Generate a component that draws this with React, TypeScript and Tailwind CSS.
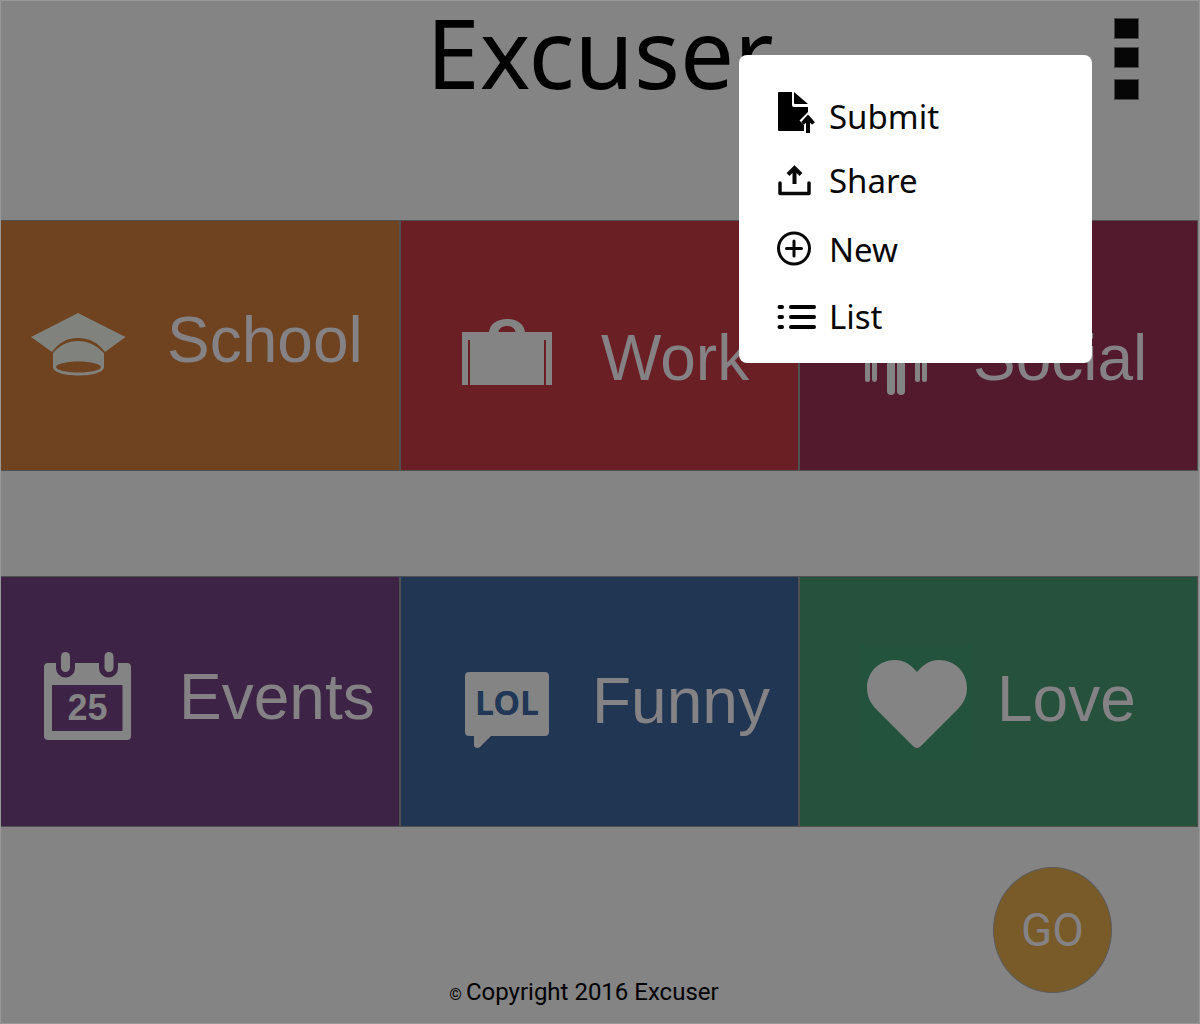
import React from "react";

function SchoolIcon() {
  return (
    <svg viewBox="0 0 116 116" className="size-[116px] shrink-0" fill="#80827e" aria-hidden="true">
      <path d="M60 26L107.500 50L87 65C80 56 72 51 60 51S41 56 34 65L13 50Z" />
      <path
        fillRule="evenodd"
        d="M35 66C42 58 50 54 60 54S78 58 86 66V80C86 85 75 88.500 60.500 88.500S35 85 35 80ZM60.500 74.500C48 74.500 38 77 38 80S48 85.500 60.500 85.500S83 83 83 80S73 74.500 60.500 74.500Z"
      />
    </svg>
  );
}

function WorkIcon() {
  return (
    <svg viewBox="0 0 116 116" className="size-[116px] shrink-0" fill="#848484" aria-hidden="true">
      <path
        fillRule="evenodd"
        d="M12 32H39C40 24 47 19 57 19S74 24 75 32H102V85H96V40H94V85H20V40H18V85H12ZM48.500 32H65.500C65 28 61 26 57 26S49 28 48.500 32Z"
      />
    </svg>
  );
}

function SocialIcon() {
  return (
    <svg viewBox="0 0 116 116" className="size-[116px] shrink-0" fill="#848484" aria-hidden="true">
      <circle cx="35" cy="21" r="6" />
      <circle cx="60" cy="12" r="8" />
      <circle cx="85" cy="21" r="6" />
      <path d="M29 30H41V79.500a2.500 2.500 0 0 1-5 0V56H34V79.500a2.500 2.500 0 0 1-5 0Z" />
      <path d="M79 30H91V79.500a2.500 2.500 0 0 1-5 0V56H84V79.500a2.500 2.500 0 0 1-5 0Z" />
      <path d="M51 23H69V91a4 4 0 0 1-8 0V58H59V91a4 4 0 0 1-8 0Z" />
    </svg>
  );
}

function EventsIcon() {
  return (
    <svg viewBox="0 0 116 116" className="size-[116px] shrink-0" fill="#848484" aria-hidden="true">
      <rect width="114" height="116" fill="#3d2345" />
      <path
        fillRule="evenodd"
        d="M18 25H26V30a9.500 9.500 0 0 0 19 0V25H69V30a9.500 9.500 0 0 0 19 0V25H97a4 4 0 0 1 4 4V98a4 4 0 0 1-4 4H18a4 4 0 0 1-4-4V29a4 4 0 0 1 4-4ZM22 47V93H92.500V47Z"
      />
      <rect x="31" y="14" width="9" height="20" rx="4.500" />
      <rect x="74.500" y="14" width="9" height="20" rx="4.500" />
      <text x="57.500" y="82" textAnchor="middle" className="font-['Liberation_Sans'] text-[36px] font-bold">
        25
      </text>
    </svg>
  );
}

function FunnyIcon() {
  return (
    <svg viewBox="0 0 116 116" className="size-[116px] shrink-0" fill="#848484" aria-hidden="true">
      <rect x="17" y="17" width="84" height="64" rx="4" />
      <path d="M26 80V90C26 93 30 94 32 92L44 80Z" />
      <text
        x="59"
        y="60"
        textAnchor="middle"
        fill="#203757"
        className="font-['Noto_Sans'] text-[34px] font-bold"
      >
        LOL
      </text>
    </svg>
  );
}

function LoveIcon() {
  return (
    <svg viewBox="0 0 116 116" className="size-[116px] shrink-0" fill="#848484" aria-hidden="true">
      <rect width="112" height="115" fill="#23523d" />
      <path d="M57 27C63 20 69 15 79 15C95 15 107 27 107 43C107 52 103 59 97 65L61 101Q57 105 53 101L17 65C11 59 7 52 7 43C7 27 19 15 35 15C45 15 51 20 57 27Z" />
    </svg>
  );
}

const tiles = [
  { name: "School", Icon: SchoolIcon, tone: "bg-[#6f4220]", pad: "pl-[17px] pt-[66px]", label: "ml-[33px] mt-[21px]" },
  { name: "Work", Icon: WorkIcon, tone: "bg-[#6a1f24]", pad: "pl-[49px] pt-[79px]", label: "ml-[35px] mt-[26px]" },
  { name: "Social", Icon: SocialIcon, tone: "bg-[#531a2e]", pad: "pl-9 pt-[79px]", label: "ml-[21px] mt-[26px]" },
  { name: "Events", Icon: EventsIcon, tone: "bg-[#3d2446]", pad: "pl-[29px] pt-[61px]", label: "ml-[33px] mt-[27px]" },
  { name: "Funny", Icon: FunnyIcon, tone: "bg-[#213652]", pad: "pl-[47px] pt-[78px]", label: "ml-7 mt-[14px]" },
  { name: "Love", Icon: LoveIcon, tone: "bg-[#25513d]", pad: "pl-[60px] pt-[68px]", label: "ml-[21px] mt-[22px]" },
];

function TileRow({ items }: { items: typeof tiles }) {
  return (
    <div className="mr-px grid grid-cols-3">
      {items.map(({ name, Icon, tone, pad, label }) => (
        <button
          key={name}
          className={`flex h-[251px] items-start overflow-hidden border border-[#505050] text-left first:border-l-0 ${tone} ${pad}`}
        >
          <Icon />
          <span className={`font-['Liberation_Sans',sans-serif] text-[64px] leading-none text-[#848284] ${label}`}>
            {name}
          </span>
        </button>
      ))}
    </div>
  );
}

function SubmitIcon() {
  return (
    <svg viewBox="0 0 40 44" className="h-11 w-10 shrink-0" aria-hidden="true">
      <path d="M2 2H15V15Q15 17 17 17H31V24L24 31V33H27V41H2Q1 41 1 40V3Q1 2 2 2Z" />
      <path d="M17 2L31 14H18Q17 14 17 13Z" />
      <path d="M31 43V29M25 33L31 27L37 33" fill="none" stroke="#fff" strokeWidth="7" />
      <path d="M31 43V29M25.500 33.500L31 27.500L36.500 33.500" fill="none" stroke="#000" strokeWidth="4" />
    </svg>
  );
}

function ShareIcon() {
  return (
    <svg viewBox="0 0 40 44" className="h-11 w-10 shrink-0" fill="none" stroke="#080808" strokeWidth="3.500" aria-hidden="true">
      <path d="M3 29V39.500H32V29" strokeLinecap="round" strokeLinejoin="round" />
      <path d="M17.500 30V15M11 20.500L17.500 14L24 20.500" strokeWidth="4" />
    </svg>
  );
}

function NewIcon() {
  return (
    <svg viewBox="0 0 40 44" className="h-11 w-10 shrink-0" fill="none" stroke="#080808" strokeWidth="3" aria-hidden="true">
      <circle cx="17" cy="25.500" r="15.500" />
      <path d="M17 18V33M9.500 25.500H24.500" strokeLinecap="round" />
    </svg>
  );
}

function ListIcon() {
  return (
    <svg
      viewBox="0 0 40 44"
      className="h-11 w-10 shrink-0"
      fill="none"
      stroke="#000"
      strokeWidth="4"
      strokeLinecap="round"
      aria-hidden="true"
    >
      <path d="M2.500 17H5M2.500 27H5M2.500 37H5M14 17H37M14 27H37M14 37H37" />
    </svg>
  );
}

const actions = [
  { name: "Submit", Icon: SubmitIcon, height: "h-16" },
  { name: "Share", Icon: ShareIcon, height: "h-[69px]" },
  { name: "New", Icon: NewIcon, height: "h-[67px]" },
  { name: "List", Icon: ListIcon, height: "h-[67px]" },
];

export default function App() {
  return (
    <div className="relative flex min-h-screen flex-col border border-[#989898] bg-[#848484]">
      <header className="relative h-[219px] pt-[3px]">
        <h1 className="text-center font-['Noto_Sans',sans-serif] text-8xl leading-none text-black">Excuser</h1>
        <button aria-label="Menu" className="absolute right-[60px] top-[17px] flex flex-col">
          <span className="h-[21px] w-[25px] border border-[#484848] bg-[#060606]" />
          <span className="mt-2 h-[21px] w-[25px] border border-[#484848] bg-[#060606]" />
          <span className="mt-[11px] h-[21px] w-[25px] border border-[#484848] bg-[#060606]" />
        </button>
      </header>

      <main className="flex flex-col gap-[105px]">
        <TileRow items={tiles.slice(0, 3)} />
        <TileRow items={tiles.slice(3)} />
      </main>

      <div className="flex justify-end pr-[87px] pt-10">
        <button className="h-[126px] w-[119px] rounded-[50%] border border-[#5c5c5c] bg-[#785b28] font-['Roboto',sans-serif] text-[46px] leading-none text-[#848284]">
          GO
        </button>
      </div>

      <footer className="-mt-[17px] flex items-baseline justify-center gap-1 pr-8 font-['Roboto',sans-serif] text-2xl leading-8 text-black">
        <span className="text-base">©</span>
        <span>Copyright 2016 Excuser</span>
      </footer>

      <nav
        aria-label="Actions"
        className="absolute right-[107px] top-[54px] flex h-[308px] w-[353px] flex-col rounded-lg bg-white pl-[38px] pt-[35px]"
      >
        {actions.map(({ name, Icon, height }) => (
          <button
            key={name}
            className={`flex items-start gap-3 text-left font-['Noto_Sans',sans-serif] text-[33px] leading-[54px] text-[#080808] ${height}`}
          >
            <Icon />
            {name}
          </button>
        ))}
      </nav>
    </div>
  );
}
